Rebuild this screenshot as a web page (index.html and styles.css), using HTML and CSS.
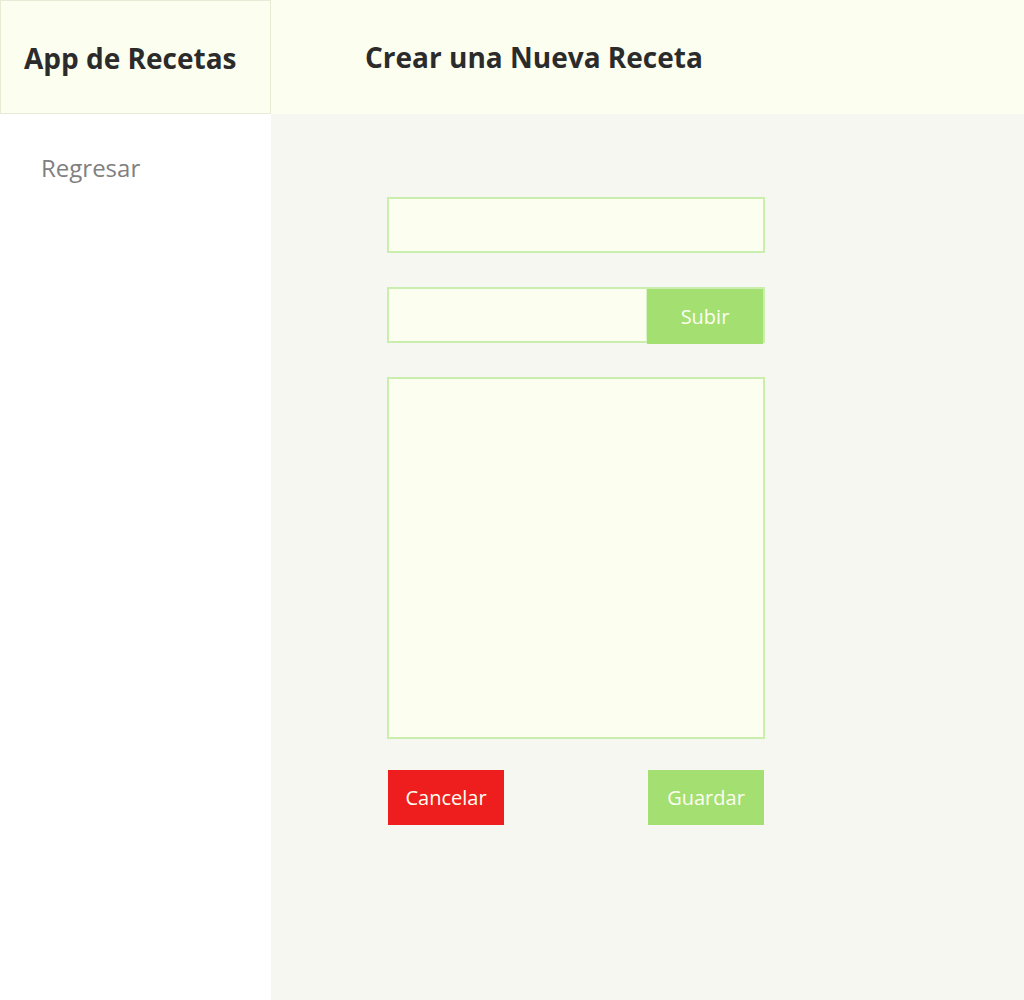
FILE: index.html
```html
<!DOCTYPE html>
<html lang="es">
<head>
<meta charset="utf-8">
<title>App de Recetas</title>
<link rel="stylesheet" href="styles.css">
</head>
<body>
<div class="app">
  <div class="brand"><h1>App de Recetas</h1></div>
  <header class="topbar"><h2>Crear una Nueva Receta</h2></header>
  <nav class="sidebar"><a href="#" class="back">Regresar</a></nav>
  <main class="content">
    <form class="form">
      <input class="field" type="text">
      <div class="upload">
        <input class="field upload-input" type="text">
        <button type="button" class="btn btn-green upload-btn">Subir</button>
      </div>
      <textarea class="field area"></textarea>
      <div class="actions">
        <button type="button" class="btn btn-red">Cancelar</button>
        <button type="button" class="btn btn-green">Guardar</button>
      </div>
    </form>
  </main>
</div>
</body>
</html>
```

FILE: styles.css
```css
* { box-sizing: border-box; }
html, body { margin: 0; padding: 0; }
body {
  font-family: "Open Sans", "Liberation Sans", sans-serif;
  background: #f6f7f0;
}
.app {
  display: grid;
  grid-template-columns: 271px 1fr;
  grid-template-rows: 114px 1fr;
  height: 1000px;
}
.brand {
  background: #fcfef0;
  border: 1px solid #e9ebd6;
  display: flex;
  align-items: center;
  padding-left: 23px;
  padding-top: 2px;
}
.brand h1 {
  margin: 0;
  font-size: 28px;
  font-weight: 700;
  color: #2b2b2b;
}
.topbar {
  background: #fcfef0;
  display: flex;
  align-items: center;
  padding-left: 94px;
}
.topbar h2 {
  margin: 0;
  font-size: 28px;
  font-weight: 700;
  color: #2b2b2b;
}
.sidebar {
  background: #ffffff;
  padding: 37px 0 0 41px;
}
.back {
  font-size: 24px;
  color: #808080;
  text-decoration: none;
}
.content {
  padding: 83px 0 0 116px;
}
.form {
  width: 378px;
  display: flex;
  flex-direction: column;
}
.field {
  display: block;
  width: 378px;
  height: 56px;
  background: #fcfef0;
  border: 2px solid #c9eead;
  margin: 0;
  padding: 0 10px;
  font-family: inherit;
  outline: none;
}
.upload {
  display: flex;
  align-items: stretch;
  margin-top: 34px;
  height: 56px;
  border: 2px solid #c9eead;
}
.upload-input {
  flex: 1;
  width: auto;
  height: auto;
  border: none;
  border-right: 1px solid #d9f3c4;
}
.upload-btn {
  width: 115px;
  height: auto;
}
.area {
  margin-top: 34px;
  height: 362px;
  resize: none;
}
.actions {
  margin-top: 31px;
  display: flex;
  justify-content: space-between;
  padding: 0 1px;
}
.btn {
  border: none;
  font-family: inherit;
  font-size: 20px;
  color: #fcfef0;
  width: 116px;
  height: 55px;
  padding: 0;
  cursor: pointer;
}
.btn-green { background: #a4df72; }
.btn-red { background: #ee1e1e; }
```
